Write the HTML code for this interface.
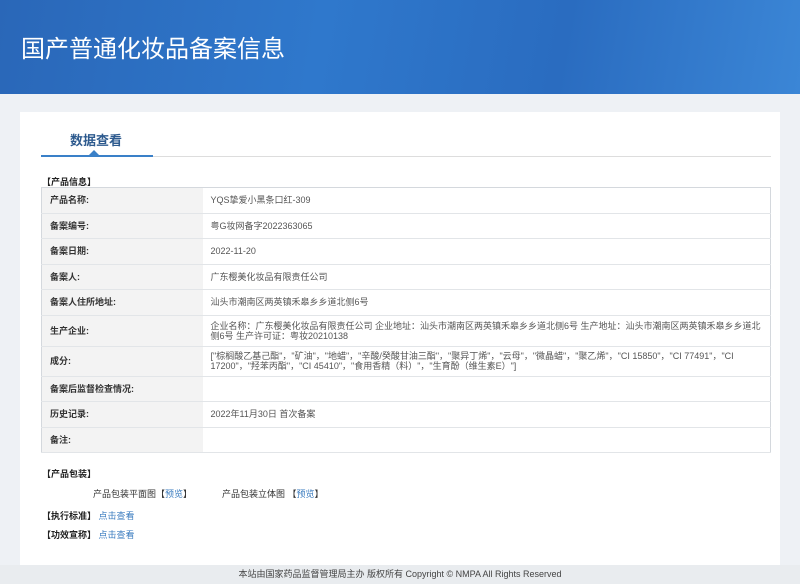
<!DOCTYPE html>
<html><head><meta charset="utf-8"><style>
*{margin:0;padding:0;box-sizing:border-box}
body{width:800px;height:584px;overflow:hidden;background:#eef1f5;font-family:"Liberation Sans","Noto Sans CJK SC",sans-serif;font-size:9px;color:#333;position:relative}
.hd{position:absolute;left:0;top:0;width:800px;height:94px;background:linear-gradient(100deg,#2a67b8 0%,#2f78cc 40%,#2a6cc0 70%,#3b86d6 100%)}
.hd h1{position:absolute;left:21px;top:29px;font-size:24px;font-weight:normal;color:#fff;letter-spacing:0px}
.card{position:absolute;left:20px;top:112px;width:760px;height:453px;background:#fff}
.tab{position:absolute;left:50px;top:18px;font-size:13px;font-weight:bold;color:#2d5a8e}
.line{position:absolute;left:21px;top:44px;width:730px;height:1px;background:#ddd}
.bl{position:absolute;left:21px;top:43px;width:112px;height:2px;background:#3a80c8}
.tri{position:absolute;left:69px;top:38px;width:0;height:0;border-left:5px solid transparent;border-right:5px solid transparent;border-bottom:5px solid #3a80c8}
.sec{position:absolute;font-weight:bold;color:#222;font-size:9px}
table{position:absolute;left:21px;top:75px;width:730px;border-collapse:collapse;border:1px solid #d4d8dd}
td{border-bottom:1px solid #e2e5e8;height:25.5px;padding:0 8px;vertical-align:middle;line-height:10px}
td.l{width:161px;background:#f3f3f3;font-weight:bold;color:#333}
td.v{color:#555}
a{color:#3a7bbf;text-decoration:none}
.ft{position:absolute;left:0;top:565px;width:800px;height:19px;background:#e9ecef;text-align:center;line-height:19px;font-size:9px;color:#444}
</style></head><body>
<div class="hd"><h1>国产普通化妆品备案信息</h1></div>
<div class="card">
<div class="tab">数据查看</div>
<div class="line"></div><div class="bl"></div><div class="tri"></div>
<div class="sec" style="left:22px;top:63px">【产品信息】</div>
<table>
<tr><td class="l">产品名称:</td><td class="v">YQS挚爱小黑条口红-309</td></tr>
<tr><td class="l">备案编号:</td><td class="v">粤G妆网备字2022363065</td></tr>
<tr><td class="l">备案日期:</td><td class="v">2022-11-20</td></tr>
<tr><td class="l">备案人:</td><td class="v">广东樱美化妆品有限责任公司</td></tr>
<tr><td class="l">备案人住所地址:</td><td class="v">汕头市潮南区两英镇禾皋乡乡道北侧6号</td></tr>
<tr><td class="l" style="height:31px">生产企业:</td><td class="v">企业名称：广东樱美化妆品有限责任公司 企业地址：汕头市潮南区两英镇禾皋乡乡道北侧6号 生产地址：汕头市潮南区两英镇禾皋乡乡道北侧6号 生产许可证：粤妆20210138</td></tr>
<tr><td class="l" style="height:30px">成分:</td><td class="v">["棕榈酸乙基己酯"，"矿油"，"地蜡"，"辛酸/癸酸甘油三酯"，"聚异丁烯"，"云母"，"微晶蜡"，"聚乙烯"，"CI 15850"，"CI 77491"，"CI 17200"，"羟苯丙酯"，"CI 45410"，"食用香精（料）"，"生育酚（维生素E）"]</td></tr>
<tr><td class="l">备案后监督检查情况:</td><td class="v"></td></tr>
<tr><td class="l">历史记录:</td><td class="v">2022年11月30日 首次备案</td></tr>
<tr><td class="l">备注:</td><td class="v"></td></tr>
</table>
<div class="sec" style="left:22px;top:355px">【产品包装】</div>
<div style="position:absolute;left:73px;top:375px">产品包装平面图【<a>预览</a>】</div>
<div style="position:absolute;left:202px;top:375px">产品包装立体图 【<a>预览</a>】</div>
<div class="sec" style="left:22px;top:397px">【执行标准】 <a style="font-weight:normal">点击查看</a></div>
<div class="sec" style="left:22px;top:416px">【功效宣称】 <a style="font-weight:normal">点击查看</a></div>
</div>
<div class="ft">本站由国家药品监督管理局主办 版权所有 Copyright © NMPA All Rights Reserved</div>
</body></html>
